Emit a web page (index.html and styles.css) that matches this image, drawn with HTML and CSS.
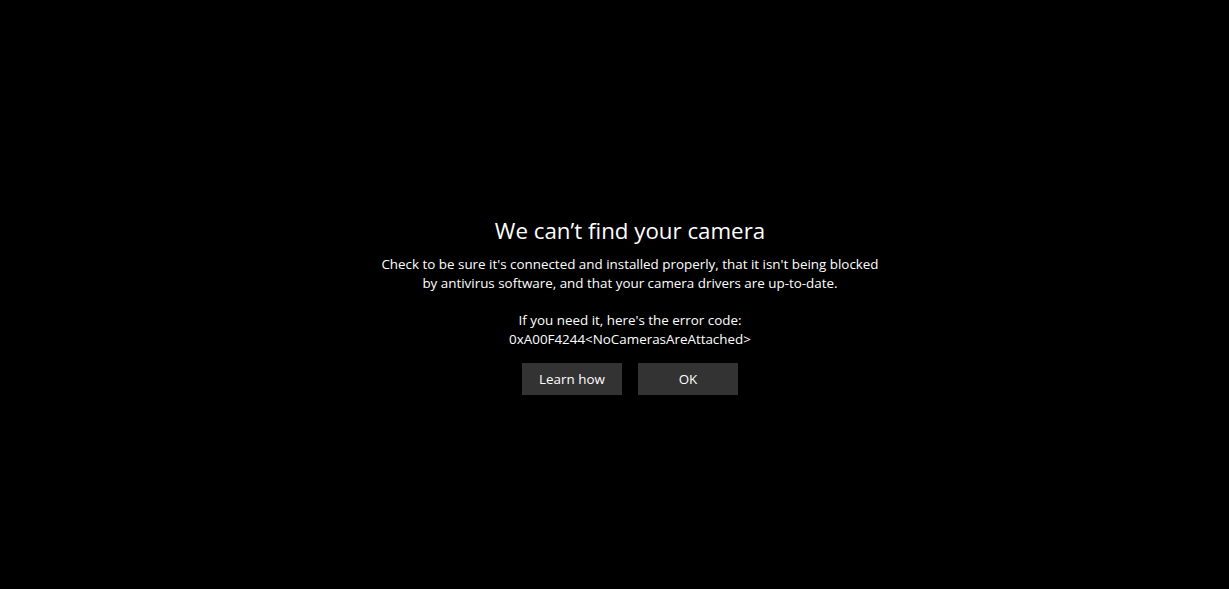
FILE: index.html
```html
<!DOCTYPE html>
<html>
<head>
<meta charset="utf-8">
<link rel="stylesheet" href="styles.css">
</head>
<body>
<main class="screen">
  <section class="dialog">
    <h1 class="title">We can’t find your camera</h1>
    <p class="text">Check to be sure it's connected and installed properly, that it isn't being blocked<br>by antivirus software, and that your camera drivers are up-to-date.</p>
    <p class="text code">If you need it, here's the error code:<br>0xA00F4244&lt;NoCamerasAreAttached&gt;</p>
    <div class="actions">
      <button class="btn">Learn how</button>
      <button class="btn">OK</button>
    </div>
  </section>
</main>
</body>
</html>
```

FILE: styles.css
```css
html, body {
  margin: 0;
  padding: 0;
  background: #000;
  height: 100%;
}
.screen {
  height: 589px;
  display: flex;
  justify-content: center;
  align-items: flex-start;
  padding-left: 31px;
  box-sizing: border-box;
  font-family: "Open Sans", "Noto Sans", sans-serif;
  color: #fff;
}
.dialog {
  margin-top: 215px;
  display: flex;
  flex-direction: column;
  align-items: center;
  text-align: center;
}
.title {
  margin: 0;
  font-weight: 400;
  font-size: 22.3px;
  line-height: 31px;
}
.text {
  margin: 9px 0 0 0;
  font-size: 13.4px;
  line-height: 19px;
}
.code {
  margin-top: 18px;
}
.actions {
  margin-top: 14px;
  display: flex;
  gap: 16px;
}
.btn {
  width: 100px;
  height: 32px;
  border: none;
  background: #333333;
  color: #fff;
  font-family: inherit;
  font-size: 13.4px;
  padding: 0;
}
```
